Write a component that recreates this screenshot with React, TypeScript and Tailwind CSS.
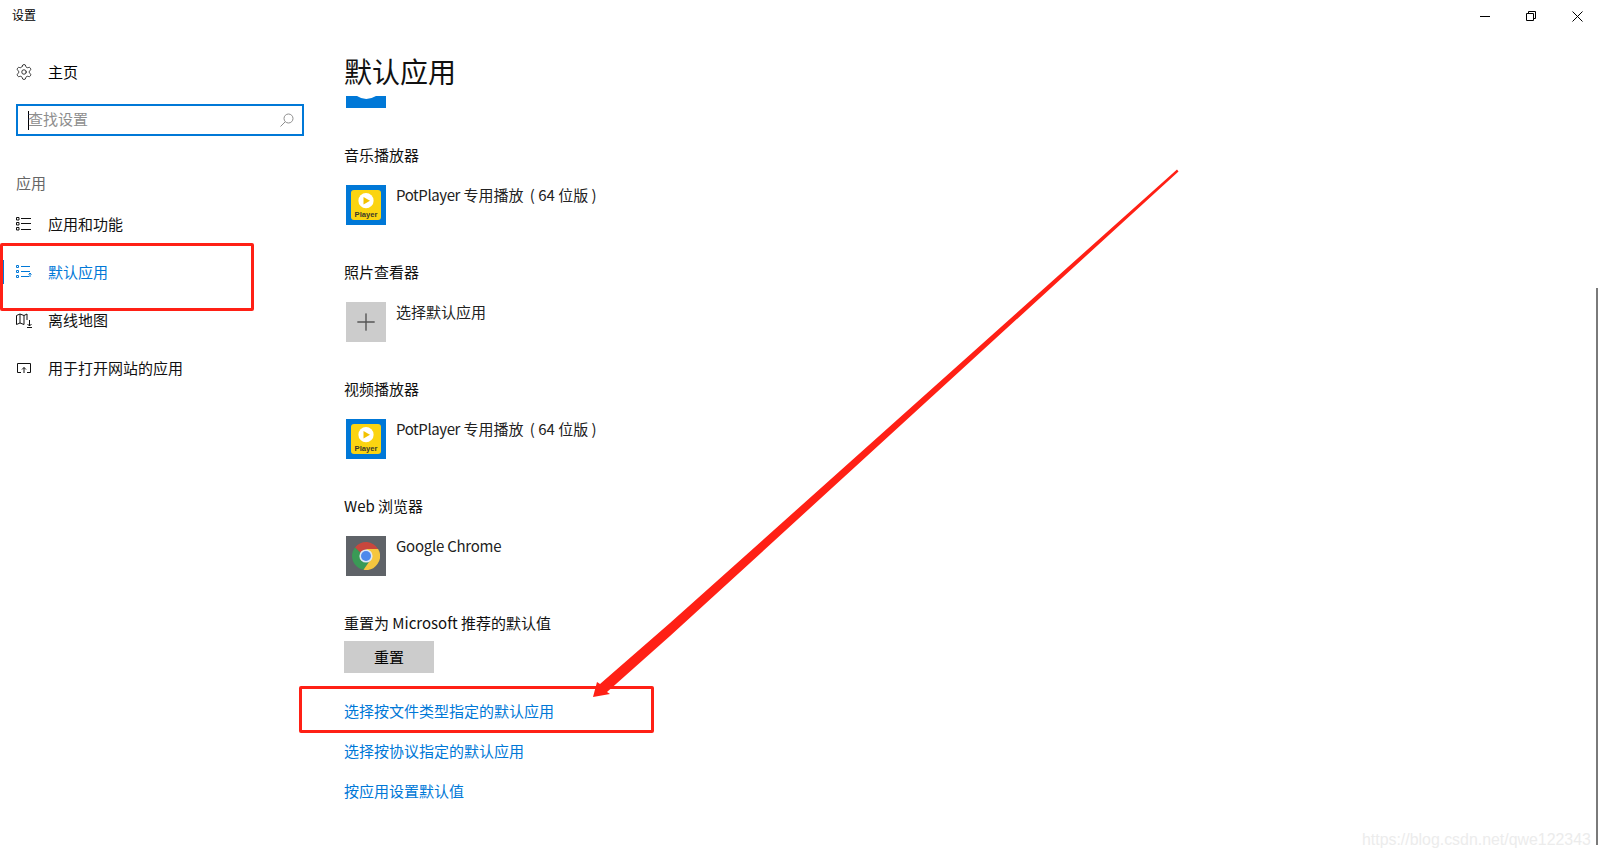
import React from 'react';
import { Settings, Plus } from 'lucide-react';

const cjk = "font-['Noto_Sans_CJK_SC','Noto_Sans',sans-serif]";

const navItems = [
  { label: '应用和功能', icon: 'list' },
  { label: '默认应用', icon: 'defaults', active: true },
  { label: '离线地图', icon: 'map' },
  { label: '用于打开网站的应用', icon: 'open' },
];

const NavIcon = ({ name }: { name: string }) => {
  if (name === 'list') {
    return (
      <svg width="16" height="16" viewBox="0 0 16 16" fill="none" stroke="currentColor">
        <path d="M0.500 1.500h2.500v2.500h-2.500zM0.500 6.500h2.500v2.500h-2.500zM0.500 11.500h2.500v2.500h-2.500zM5 2.500h10M5 7.500h10M5 13.500h10" />
      </svg>
    );
  }
  if (name === 'defaults') {
    return (
      <svg width="16" height="16" viewBox="0 0 16 16" fill="none" stroke="currentColor">
        <path d="M0.500 1.500h2v2h-2zM0.500 6.500h2v2h-2zM0.500 11.500h2v2h-2zM5 2.500h9M5 7.500h9M5 12.500h8M14 13v-4M12.500 10.500l1.500-1.500 1.500 1.500" />
      </svg>
    );
  }
  if (name === 'map') {
    return (
      <svg width="16" height="16" viewBox="0 0 16 16" fill="none" stroke="currentColor">
        <path d="M0.500 3.500l3.500-1.500 4 1.500 3-1.500v6M0.500 3.500v9l3.500-1.500 4 1.500M4 2v9M8 3.500v9M13.500 8v6M11.500 12l2 2 2-2M11 15.500h5" />
      </svg>
    );
  }
  return (
    <svg width="16" height="16" viewBox="0 0 16 16" fill="none" stroke="currentColor">
      <path d="M5 12.500h-3.500v-9h13v9h-3.500M8 13v-5.500M6 9.500l2-2 2 2" />
    </svg>
  );
};

const PotPlayerIcon = () => (
  <div className="w-10 h-10 bg-[#0078d7] flex items-center justify-center shrink-0">
    <svg width="30" height="30" viewBox="0 0 30 30">
      <rect width="30" height="30" rx="3" fill="#fbd411" />
      <circle cx="15" cy="10.700" r="7.600" fill="#fff" />
      <path d="M12.500 7l6.500 3.700-6.500 3.700z" fill="#f2c200" />
      <text x="15" y="26.500" textAnchor="middle" fontSize="7.600" fontWeight="700" fill="#3a3a2a" fontFamily="Liberation Sans, sans-serif">Player</text>
    </svg>
  </div>
);

const ChromeIcon = () => (
  <div className="w-10 h-10 bg-[#5f6368] flex items-center justify-center shrink-0">
    <svg width="28" height="28" viewBox="0 0 28 28">
      <path d="M14 7H26.100A14 14 0 0 0 3 5.400L8.500 10.800L14 14Z" fill="#c9473d" />
      <path d="M3 5.400A14 14 0 0 0 11.500 27.800L17.300 19.500L14 14L8.500 10.800Z" fill="#3a9a56" />
      <path d="M26.100 7A14 14 0 0 1 11.500 27.800L17.300 19.500L20 14L14 7Z" fill="#f5c63f" />
      <circle cx="14" cy="14" r="6.600" fill="#dfe8f5" />
      <circle cx="14" cy="14" r="5" fill="#4d88ec" />
    </svg>
  </div>
);

const AppRow = ({ icon, label, labelClass = '' }: { icon: React.ReactNode; label: React.ReactNode; labelClass?: string }) => (
  <div className="flex ml-[2px] mt-5 h-10">
    {icon}
    <span className={`ml-[10px] text-[15px] leading-5 text-[#222] h-5 ${labelClass}`}>{label}</span>
  </div>
);

const Section = ({ title, className, children }: { title: string; className: string; children: React.ReactNode }) => (
  <div className={className}>
    <div className="text-[15px] leading-5 text-[#111]">{title}</div>
    {children}
  </div>
);

const potPlayerLabel = (
  <>
    <span className="tracking-[-0.4px]">PotPlayer</span> 专用播放 <span className="ml-[3px]">( 64 位版 )</span>
  </>
);

export default function App() {
  return (
    <div className={`relative w-[1600px] h-[859px] bg-white overflow-hidden ${cjk}`}>
      {/* title bar */}
      <div className="flex items-start justify-between h-8">
        <span className="ml-3 mt-[7px] text-xs leading-4 text-black">设置</span>
        <div className="flex items-center h-8 text-black">
          <div className="w-[46px] flex justify-center">
            <svg width="10" height="10" viewBox="0 0 10 10" stroke="currentColor"><path d="M0 5.500h10" /></svg>
          </div>
          <div className="w-[46px] flex justify-center">
            <svg width="10" height="10" viewBox="0 0 10 10" fill="none" stroke="currentColor">
              <path d="M0.500 2.500h7v7h-7zM2.500 2.500v-2h7v7h-2" />
            </svg>
          </div>
          <div className="w-[46px] flex justify-center">
            <svg width="11" height="11" viewBox="0 0 11 11" stroke="currentColor"><path d="M0.500 0.500l10 10M10.500 0.500l-10 10" /></svg>
          </div>
        </div>
      </div>

      <div className="flex">
        {/* sidebar */}
        <aside className="w-[344px] shrink-0">
          <div className="flex items-center h-6 mt-7 pl-[15px] text-[#111]">
            <Settings size={18} strokeWidth={1.1} />
            <span className="ml-[15px] text-[15px] text-black">主页</span>
          </div>
          <div className="ml-4 mt-5 w-[288px] h-8 border-2 border-[#0078d7] flex items-center pl-[10px] pr-2">
            <div className="w-px h-[19px] bg-black -mr-px shrink-0" />
            <span className="text-[15px] leading-5 text-[#8e8e8e] flex-1 mb-[2px]">查找设置</span>
            <svg width="14" height="14" viewBox="0 0 14 14" fill="none" stroke="#8e8e8e">
              <circle cx="8.500" cy="5.500" r="4.500" />
              <path d="M5.200 8.800L0.500 13.500" />
            </svg>
          </div>
          <div className="ml-4 mt-[37px] text-[15px] leading-5 text-[#666]">应用</div>
          <nav className="mt-[7px]">
            {navItems.map((item) => (
              <div key={item.label} className={`relative flex items-center h-12 pl-4 ${item.active ? 'text-[#0078d7]' : 'text-[#111]'}`}>
                {item.active && <div className="absolute left-[2px] top-3 w-[2px] h-6 bg-[#0078d7]" />}
                <NavIcon name={item.icon} />
                <span className="ml-4 text-[15px]">{item.label}</span>
              </div>
            ))}
          </nav>
        </aside>

        {/* main */}
        <main className="flex-1">
          <h1 className="text-[28px] leading-10 text-[#111] mt-[19px]">默认应用</h1>
          <svg className="block ml-[2px] mt-[5px]" width="40" height="12" viewBox="0 0 40 12">
            <rect width="40" height="12" fill="#0078d7" />
            <path d="M11 0Q20 6 30 0Z" fill="#fff" />
          </svg>
          <Section title="音乐播放器" className="mt-[37px]">
            <AppRow icon={<PotPlayerIcon />} label={potPlayerLabel} />
          </Section>
          <Section title="照片查看器" className="mt-[37px]">
            <AppRow
              icon={<div className="w-10 h-10 bg-[#cccccc] flex items-center justify-center text-[#555]"><Plus size={28} strokeWidth={1.2} /></div>}
              label="选择默认应用"
            />
          </Section>
          <Section title="视频播放器" className="mt-[37px]">
            <AppRow icon={<PotPlayerIcon />} label={potPlayerLabel} />
          </Section>
          <Section title="Web 浏览器" className="mt-[37px]">
            <AppRow icon={<ChromeIcon />} label="Google Chrome" labelClass="tracking-[-0.25px]" />
          </Section>
          <Section title="重置为 Microsoft 推荐的默认值" className="mt-[37px]">
            <button className="block mt-2 w-[90px] h-8 bg-[#cccccc] text-[15px] text-black">重置</button>
          </Section>
          <div className="mt-[28px] flex flex-col gap-5 text-[15px] leading-5 text-[#0078d7]">
            <a>选择按文件类型指定的默认应用</a>
            <a>选择按协议指定的默认应用</a>
            <a>按应用设置默认值</a>
          </div>
        </main>
      </div>

      {/* scrollbar */}
      <div className="absolute right-[2px] top-[288px] w-[2px] h-[557px] bg-[#7a7a7a]" />

      {/* screenshot annotations */}
      <div className="absolute left-0 top-[243px] w-[254px] h-[68px] border-[3px] border-[#ff2015] rounded-[2px]" />
      <div className="absolute left-[299px] top-[686px] w-[355px] h-[47px] border-[3px] border-[#ff2015] rounded-[2px]" />
      <svg className="absolute left-0 top-0 pointer-events-none" width="1600" height="859">
        <polygon points="1177,169.500 1178.500,171.500 670,636 607,692 610,694 593,697 597,682 600,684 670,623" fill="#ff2015" />
      </svg>
      <div className="absolute left-[1362px] top-[830px] text-[15.900px] leading-5 text-[#ececec] font-['Liberation_Sans',sans-serif]">https://blog.csdn.net/qwe122343</div>
    </div>
  );
}
